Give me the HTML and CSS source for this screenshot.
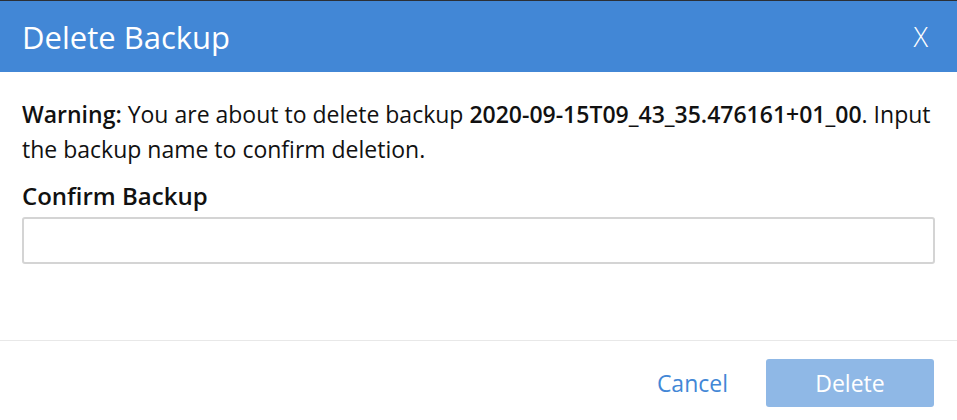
FILE: index.html
```html
<!DOCTYPE html>
<html>
<head>
<meta charset="utf-8">
<link rel="stylesheet" href="styles.css">
</head>
<body>
<div class="modal">
  <div class="modal-header">
    <h2 class="modal-title">Delete Backup</h2>
    <span class="modal-close">X</span>
  </div>
  <div class="modal-body">
    <p class="warning"><strong>Warning:</strong> You are about to delete backup <strong>2020-09-15T09_43_35.476161+01_00</strong>. Input the backup name to confirm deletion.</p>
    <label class="field-label">Confirm Backup</label>
    <input class="field-input" type="text">
  </div>
  <div class="modal-footer">
    <button class="btn-link">Cancel</button>
    <button class="btn-primary" disabled>Delete</button>
  </div>
</div>
</body>
</html>
```
FILE: styles.css
```css
html, body {
  margin: 0;
  padding: 0;
  background: #ffffff;
}
body {
  font-family: "Open Sans", "Noto Sans", sans-serif;
  color: #111111;
}
.modal {
  width: 957px;
  height: 420px;
  border-top: 1px solid #2b2f36;
  box-sizing: border-box;
  display: flex;
  flex-direction: column;
}
.modal-header {
  background: #4287d6;
  height: 71px;
  flex: none;
  display: flex;
  align-items: center;
  justify-content: space-between;
  padding: 0 29px 0 22px;
  color: #ffffff;
}
.modal-title {
  margin: 0;
  font-size: 31px;
  font-weight: 400;
  line-height: 40px;
}
.modal-close {
  font-size: 27px;
  font-weight: 300;
  line-height: 32px;
}
.modal-body {
  padding: 25px 22px 0 22px;
  height: 269px;
  flex: none;
  box-sizing: border-box;
  border-bottom: 1px solid #e8e8e8;
}
.warning {
  margin: 0;
  font-size: 23px;
  line-height: 35px;
}
.warning strong {
  font-weight: 600;
}
.field-label {
  display: block;
  margin-top: 14px;
  font-size: 24px;
  font-weight: 600;
  line-height: 30px;
}
.field-input {
  display: block;
  margin-top: 6px;
  width: 100%;
  height: 47px;
  box-sizing: border-box;
  border: 2px solid #d4d4d4;
  border-radius: 3px;
  font-family: inherit;
  font-size: 20px;
}
.modal-footer {
  flex: 1;
  display: flex;
  align-items: flex-start;
  justify-content: flex-end;
  padding: 18px 23px 0 0;
  gap: 38px;
}
.btn-link {
  background: none;
  border: none;
  font-family: inherit;
  font-size: 23px;
  color: #4287d6;
  padding: 0;
  height: 48px;
  line-height: 48px;
}
.btn-primary {
  width: 168px;
  height: 48px;
  border: none;
  border-radius: 3px;
  background: #8fb8e6;
  color: #ffffff;
  font-family: inherit;
  font-size: 23px;
  padding: 0;
}
```
